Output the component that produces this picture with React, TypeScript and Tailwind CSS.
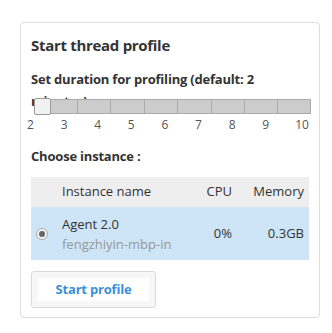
import React from 'react';

const TICKS = ['2', '3', '4', '5', '6', '7', '8', '9', '10'];

function DurationSlider() {
    return (
        <div className="relative -mt-[13px] ml-[3px] w-[277px]">
            {/* track */}
            <div className="flex h-[15px] border border-[#aaa] bg-[#cccccc]">
                <div className="w-[43px] border-r border-[#aaa]" />
                {[0, 1, 2, 3, 4, 5].map((i) => (
                    <div key={i} className="w-[33.4px] border-r border-[#aaa]" />
                ))}
                <div className="flex-1" />
            </div>
            {/* handle */}
            <div className="absolute left-0 top-[-1px] h-[17px] w-[17px] rounded-[2px] border border-[#999] bg-[#f1f1f1]" />
        </div>
    );
}

export default function App() {
    return (
        <div className="h-[333px] w-[332px] bg-white pl-[20px] pt-[22px]" style={{ fontFamily: '"Open Sans", "Noto Sans", sans-serif' }}>
            <div className="w-[300px] rounded-[4px] border border-[#dddddd] px-[10px] pb-[9px] pt-[10px] text-[#333]">
                <h3 className="text-[15px] font-bold leading-[24px] tracking-[-0.3px] text-[#333]">Start thread profile</h3>

                <div className="mt-[11px] h-[44px] w-[230px] overflow-visible text-[13px] font-bold leading-[22px] tracking-[-0.2px]">
                    Set duration for profiling (default: 2 minutes)
                </div>
                <DurationSlider />
                <div className="relative mt-[3px] h-[16px] text-[12px] leading-[16px] text-[#555]">
                    {TICKS.map((t, i) => (
                        <span
                            key={t}
                            className="absolute -translate-x-1/2"
                            style={{ left: i === 8 ? 271 : i * 33.6 - 0.5 }}
                        >
                            {t}
                        </span>
                    ))}
                </div>

                <div className="mt-[13px] text-[13px] font-bold leading-[20px] tracking-[-0.2px]">Choose instance :</div>

                <div className="mt-[11px] w-[278px] text-[13px] text-[#333]">
                    <div className="flex h-[30px] items-center bg-[#eeeeee]">
                        <div className="w-[31px]" />
                        <div className="flex-1">Instance name</div>
                        <div className="w-[45px] text-right">CPU</div>
                        <div className="w-[77px] pr-[5px] text-right">Memory</div>
                    </div>
                    <div className="flex h-[53px] items-center bg-[#cde5f7]">
                        <div className="flex w-[31px] pl-[5px] pt-[1px]">
                            <span className="flex h-[12px] w-[12px] items-center justify-center rounded-full border border-[#aaa] bg-[#f4f4f4]">
                                <span className="h-[6px] w-[6px] rounded-full bg-[#666]" />
                            </span>
                        </div>
                        <div className="w-[110px] overflow-hidden whitespace-nowrap leading-[20px]">
                            <div>Agent 2.0</div>
                            <div className="text-[#999]">fengzhiyin-mbp-instance</div>
                        </div>
                        <div className="flex-1 text-right">0%</div>
                        <div className="w-[77px] pr-[5px] text-right">0.3GB</div>
                    </div>
                </div>

                <button className="mt-[11px] flex h-[37px] w-[125px] items-center justify-center rounded-[3px] border border-[#d9d9d9] bg-[#f7f7f7] px-[6px] py-[6px]">
                    <span className="flex h-full w-full items-center justify-center bg-white text-[13px] font-bold tracking-[-0.2px] text-[#3b8fd9]">
                        Start profile
                    </span>
                </button>
            </div>
        </div>
    );
}
